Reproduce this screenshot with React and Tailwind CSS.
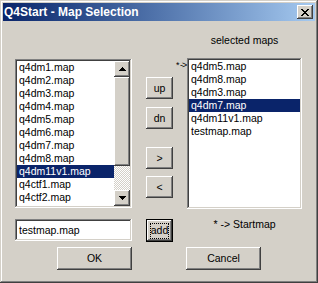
const raised =
  'shadow-[inset_-1px_-1px_#404040,inset_1px_1px_#ffffff,inset_-2px_-2px_#808080,inset_2px_2px_#d4d0c8]';
const sunken =
  'shadow-[inset_-1px_-1px_#ffffff,inset_1px_1px_#808080,inset_-2px_-2px_#d4d0c8,inset_2px_2px_#404040]';

const allMaps = [
  'q4dm1.map',
  'q4dm2.map',
  'q4dm3.map',
  'q4dm4.map',
  'q4dm5.map',
  'q4dm6.map',
  'q4dm7.map',
  'q4dm8.map',
  'q4dm11v1.map',
  'q4ctf1.map',
  'q4ctf2.map',
  'q4ctf3.map',
];

const selectedMaps = ['q4dm5.map', 'q4dm8.map', 'q4dm3.map', 'q4dm7.map', 'q4dm11v1.map', 'testmap.map'];

function Arrow({ down }) {
  return (
    <svg width="7" height="4" viewBox="0 0 7 4" shapeRendering="crispEdges" className={down ? 'rotate-180' : ''}>
      <rect x="3" y="0" width="1" height="1" fill="#000" />
      <rect x="2" y="1" width="3" height="1" fill="#000" />
      <rect x="1" y="2" width="5" height="1" fill="#000" />
      <rect x="0" y="3" width="7" height="1" fill="#000" />
    </svg>
  );
}

function CloseGlyph() {
  const px = [
    [0, 0], [1, 0], [6, 0], [7, 0],
    [1, 1], [2, 1], [5, 1], [6, 1],
    [2, 2], [3, 2], [4, 2], [5, 2],
    [3, 3], [4, 3],
    [2, 4], [3, 4], [4, 4], [5, 4],
    [1, 5], [2, 5], [5, 5], [6, 5],
    [0, 6], [1, 6], [6, 6], [7, 6],
  ];
  return (
    <svg width="8" height="7" viewBox="0 0 8 7" shapeRendering="crispEdges">
      {px.map(([x, y]) => (
        <rect key={`${x}-${y}`} x={x} y={y} width="1" height="1" fill="#000" />
      ))}
    </svg>
  );
}

function Button({ children, className = '' }) {
  return (
    <div className={`flex items-center justify-center bg-[#d4d0c8] ${raised} ${className}`}>
      {children}
    </div>
  );
}

export default function App() {
  return (
    <div
      className="w-[318px] h-[283px] bg-[#d4d0c8] p-[3px] flex flex-col text-black text-[10.5px] shadow-[inset_-1px_-1px_#404040,inset_1px_1px_#d4d0c8,inset_-2px_-2px_#808080,inset_2px_2px_#ffffff]"
      style={{ fontFamily: '"Liberation Sans", Arial, sans-serif' }}
    >
      {/* title bar */}
      <div className="h-[18px] flex items-center justify-between pl-[1px] pr-[2px] bg-linear-to-r from-[#0a246a] to-[#a6caf0]">
        <span className="text-white font-bold text-[12px] leading-[18px]">Q4Start - Map Selection</span>
        <div className={`w-[16px] h-[14px] flex items-center justify-center bg-[#d4d0c8] ${raised}`}>
          <CloseGlyph />
        </div>
      </div>

      {/* body */}
      <div className="flex pl-[12px] leading-[13px]">
        {/* left column */}
        <div className="flex flex-col w-[117px] pt-[38px]">
          <div className={`h-[149px] bg-white p-[2px] flex ${sunken}`}>
            <div className="flex-1 overflow-hidden">
              {allMaps.map((m) => (
                <div
                  key={m}
                  className={`h-[13px] pl-[2px] whitespace-nowrap ${m === 'q4dm11v1.map' ? 'bg-[#0a246a] text-white' : ''}`}
                >
                  {m}
                </div>
              ))}
            </div>
            <div className="w-[16px] flex flex-col">
              <Button className="h-[16px]">
                <Arrow />
              </Button>
              <div className={`h-[89px] bg-[#d4d0c8] ${raised}`} />
              <div className="flex-1 bg-[image:repeating-conic-gradient(#d4d0c8_0%_25%,#ffffff_0%_50%)] bg-[length:2px_2px]" />
              <Button className="h-[16px]">
                <Arrow down />
              </Button>
            </div>
          </div>
          <div className={`mt-[11px] h-[22px] bg-white pl-[4px] flex items-center ${sunken}`}>testmap.map</div>
        </div>

        {/* middle column */}
        <div className="flex flex-col w-[27px] ml-[14px] pt-[56px]">
          <Button className="h-[22px]">up</Button>
          <Button className="h-[22px] mt-[8px]">dn</Button>
          <Button className="h-[22px] mt-[18px]">&gt;</Button>
          <Button className="h-[22px] mt-[7px]">&lt;</Button>
          <div className="mt-[21px] h-[23px] border border-black flex">
            <Button className="flex-1">
              <span className="w-[19px] h-[16px] border border-dotted border-black flex items-center justify-center">add</span>
            </Button>
          </div>
        </div>

        {/* right column */}
        <div className="flex flex-col w-[115px] ml-[14px] pt-[13px]">
          <div className="h-[13px] text-center">selected maps</div>
          <div className={`relative mt-[11px] h-[151px] bg-white p-[2px] ${sunken}`}>
            <span className="absolute left-[-11px] top-[1px] text-[9px] tracking-[-1px] whitespace-nowrap">* -&gt;</span>
            {selectedMaps.map((m) => (
              <div
                key={m}
                className={`h-[13px] pl-[2px] whitespace-nowrap ${m === 'q4dm7.map' ? 'bg-[#0a246a] text-white' : ''}`}
              >
                {m}
              </div>
            ))}
          </div>
          <div className="mt-[9px] h-[13px] text-center">* -&gt; Startmap</div>
        </div>
      </div>

      {/* bottom buttons */}
      <div className="mt-[5px] grid grid-cols-[117px_27px_115px] gap-x-[14px] pl-[12px]">
        <Button className="w-[75px] h-[23px] justify-self-end">OK</Button>
        <div />
        <Button className="w-[75px] h-[23px] -ml-px">Cancel</Button>
      </div>
    </div>
  );
}
